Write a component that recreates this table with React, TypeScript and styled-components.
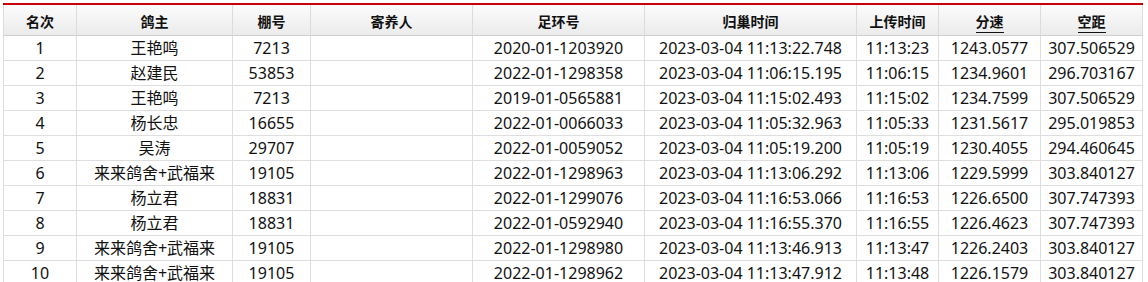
import React from 'react';
import styled, { createGlobalStyle } from 'styled-components';

const GlobalStyle = createGlobalStyle`
  body {
    margin: 0;
    background: #fff;
    font-family: "Noto Sans", "Noto Sans CJK SC", sans-serif;
  }
`;

type Row = {
  rank: number;
  owner: string;
  loft: string;
  fosterer: string;
  ring: string;
  arrival: string;
  upload: string;
  speed: string;
  distance: string;
};

const columns: { title: string; width: number; link?: boolean }[] = [
  { title: '名次', width: 73 },
  { title: '鸽主', width: 156 },
  { title: '棚号', width: 78 },
  { title: '寄养人', width: 162 },
  { title: '足环号', width: 172 },
  { title: '归巢时间', width: 212 },
  { title: '上传时间', width: 82 },
  { title: '分速', width: 102, link: true },
  { title: '空距', width: 102, link: true },
];

const rows: Row[] = [
  { rank: 1, owner: '王艳鸣', loft: '7213', fosterer: '', ring: '2020-01-1203920', arrival: '2023-03-04 11:13:22.748', upload: '11:13:23', speed: '1243.0577', distance: '307.506529' },
  { rank: 2, owner: '赵建民', loft: '53853', fosterer: '', ring: '2022-01-1298358', arrival: '2023-03-04 11:06:15.195', upload: '11:06:15', speed: '1234.9601', distance: '296.703167' },
  { rank: 3, owner: '王艳鸣', loft: '7213', fosterer: '', ring: '2019-01-0565881', arrival: '2023-03-04 11:15:02.493', upload: '11:15:02', speed: '1234.7599', distance: '307.506529' },
  { rank: 4, owner: '杨长忠', loft: '16655', fosterer: '', ring: '2022-01-0066033', arrival: '2023-03-04 11:05:32.963', upload: '11:05:33', speed: '1231.5617', distance: '295.019853' },
  { rank: 5, owner: '吴涛', loft: '29707', fosterer: '', ring: '2022-01-0059052', arrival: '2023-03-04 11:05:19.200', upload: '11:05:19', speed: '1230.4055', distance: '294.460645' },
  { rank: 6, owner: '来来鸽舍+武福来', loft: '19105', fosterer: '', ring: '2022-01-1298963', arrival: '2023-03-04 11:13:06.292', upload: '11:13:06', speed: '1229.5999', distance: '303.840127' },
  { rank: 7, owner: '杨立君', loft: '18831', fosterer: '', ring: '2022-01-1299076', arrival: '2023-03-04 11:16:53.066', upload: '11:16:53', speed: '1226.6500', distance: '307.747393' },
  { rank: 8, owner: '杨立君', loft: '18831', fosterer: '', ring: '2022-01-0592940', arrival: '2023-03-04 11:16:55.370', upload: '11:16:55', speed: '1226.4623', distance: '307.747393' },
  { rank: 9, owner: '来来鸽舍+武福来', loft: '19105', fosterer: '', ring: '2022-01-1298980', arrival: '2023-03-04 11:13:46.913', upload: '11:13:47', speed: '1226.2403', distance: '303.840127' },
  { rank: 10, owner: '来来鸽舍+武福来', loft: '19105', fosterer: '', ring: '2022-01-1298962', arrival: '2023-03-04 11:13:47.912', upload: '11:13:48', speed: '1226.1579', distance: '303.840127' },
];

export default function App() {
  return (
    <>
      <GlobalStyle />
      <Wrapper>
        <ResultTable>
          <colgroup>
            {columns.map((c) => (
              <col key={c.title} style={{ width: c.width }} />
            ))}
          </colgroup>
          <thead>
            <tr>
              {columns.map((c) => (
                <HeadCell key={c.title}>
                  {c.link ? <SortLink>{c.title}</SortLink> : c.title}
                </HeadCell>
              ))}
            </tr>
          </thead>
          <tbody>
            {rows.map((r) => (
              <tr key={r.rank}>
                <Cell>{r.rank}</Cell>
                <Cell>{r.owner}</Cell>
                <Cell>{r.loft}</Cell>
                <Cell>{r.fosterer}</Cell>
                <Cell>{r.ring}</Cell>
                <Cell>{r.arrival}</Cell>
                <Cell>{r.upload}</Cell>
                <Cell>{r.speed}</Cell>
                <Cell>{r.distance}</Cell>
              </tr>
            ))}
          </tbody>
        </ResultTable>
      </Wrapper>
    </>
  );
}

const Wrapper = styled.div`
  padding: 3px 0 0 3px;
`;
const ResultTable = styled.table`
  width: 1139px;
  table-layout: fixed;
  border-collapse: collapse;
  border-top: 1px solid #e2e2e2;
  color: #111;
`;
const HeadCell = styled.th`
  height: 29px;
  padding: 1px 0 0;
  border: 1px solid #dcdcdc;
  border-top: 2px solid #c8000a;
  border-bottom: 1px solid #cfcfcf;
  background: linear-gradient(#fbfbfb, #ebebeb);
  font-size: 14px;
  font-weight: bold;
  text-align: center;
  white-space: nowrap;
`;
const SortLink = styled.span`
  color: #111;
  border-bottom: 1px solid #111;
  padding-bottom: 1px;
  cursor: pointer;
`;
const Cell = styled.td`
  height: 24px;
  padding: 0;
  border: 1px solid #dedede;
  font-size: 16px;
  line-height: 22px;
  text-align: center;
  white-space: nowrap;
`;
